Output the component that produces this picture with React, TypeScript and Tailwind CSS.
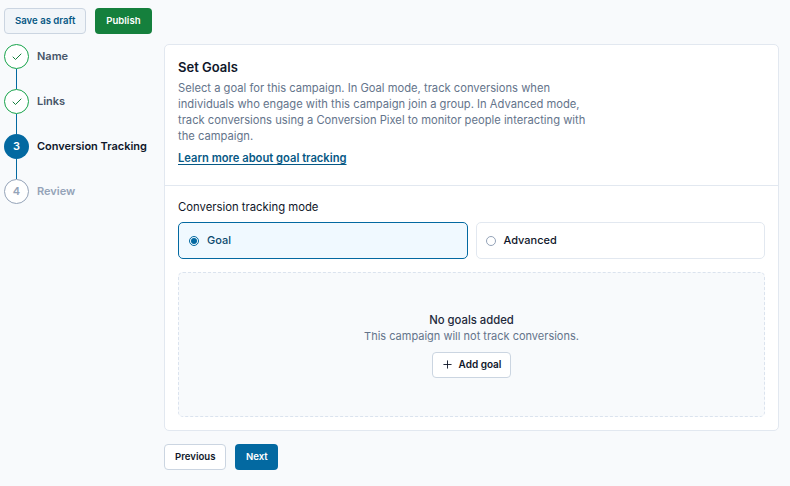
import React from "react";

function Check() {
  return (
    <svg width="12" height="12" viewBox="0 0 24 24" fill="none" stroke="#15803d" strokeWidth="2" strokeLinecap="round" strokeLinejoin="round">
      <path d="M20 6 9 17l-5-5" />
    </svg>
  );
}

function Step({ state, n, label }: { state: "done" | "current" | "todo"; n: number; label: string }) {
  let circle = "";
  let text = "";
  if (state === "done") {
    circle = "border border-[#16a34a] bg-white";
    text = "text-[#475569]";
  } else if (state === "current") {
    circle = "bg-[#0369a1] text-white";
    text = "text-[#0f172a]";
  } else {
    circle = "border border-[#94a3b8] bg-white text-[#94a3b8]";
    text = "text-[#94a3b8]";
  }
  return (
    <div className="flex items-center gap-[8px] h-[25px]">
      <div className={`w-[25px] h-[25px] rounded-full flex items-center justify-center text-[11px] font-semibold ${circle}`}>
        {state === "done" ? <Check /> : n}
      </div>
      <span className={`text-[11px] font-semibold ${text}`}>{label}</span>
    </div>
  );
}

function Connector() {
  return (
    <div className="w-[25px] flex justify-center">
      <div className="w-[1.5px] h-[20px] bg-[#0369a1]" />
    </div>
  );
}

export default function App() {
  return (
    <div className="w-[790px] h-[486px] bg-[#f8fafc] overflow-hidden" style={{ fontFamily: "Inter, 'Liberation Sans', sans-serif" }}>
      <div className="flex gap-[9px] pl-[4px] pt-[8px]">
        <button className="h-[26px] px-[10px] rounded-[4px] border border-[#cbd5e1] bg-[#f1f5f9] text-[9.6px] font-semibold text-[#075985]">
          Save as draft
        </button>
        <button className="h-[26px] px-[11px] rounded-[4px] bg-[#15803d] text-[9.6px] font-semibold text-white">
          Publish
        </button>
      </div>
      <div className="flex pl-[4px] pt-[10px]">
        <div className="w-[160px] flex flex-col">
          <Step state="done" n={1} label="Name" />
          <Connector />
          <Step state="done" n={2} label="Links" />
          <Connector />
          <Step state="current" n={3} label="Conversion Tracking" />
          <Connector />
          <Step state="todo" n={4} label="Review" />
        </div>
        <div className="flex flex-col">
          <div className="w-[615px] bg-white border border-[#e2e8f0] rounded-[5px]">
            <div className="px-[13px] pt-[13px] pb-[19px] border-b border-[#e2e8f0]">
              <h2 className="text-[13px] font-semibold text-[#0f172a] leading-[18px]">Set Goals</h2>
              <p className="mt-[4px] w-[420px] text-[11.2px] leading-[16px] text-[#64748b]">
                Select a goal for this campaign. In Goal mode, track conversions when individuals who engage with this campaign join a group. In Advanced mode, track conversions using a Conversion Pixel to monitor people interacting with the campaign.
              </p>
              <a className="block w-fit mt-[6px] text-[11.2px] font-semibold text-[#075985] underline underline-offset-2 leading-[16px]">
                Learn more about goal tracking
              </a>
            </div>
            <div className="px-[13px] pt-[13px] pb-[13px]">
              <div className="text-[11.3px] text-[#0f172a] leading-[16px]">Conversion tracking mode</div>
              <div className="mt-[7px] grid grid-cols-2 gap-[8px]">
                <div className="h-[37px] rounded-[5px] border border-[#0369a1] bg-[#f0f9ff] flex items-center gap-[8px] px-[10px]">
                  <div className="w-[10px] h-[10px] rounded-full border border-[#0369a1] flex items-center justify-center">
                    <div className="w-[6px] h-[6px] rounded-full bg-[#0369a1]" />
                  </div>
                  <span className="text-[11px] font-medium text-[#0c4a6e]">Goal</span>
                </div>
                <div className="h-[37px] rounded-[5px] border border-[#e2e8f0] bg-white flex items-center gap-[8px] px-[9px]">
                  <div className="w-[10px] h-[10px] rounded-full border border-[#94a3b8]" />
                  <span className="text-[11px] font-medium text-[#0f172a]">Advanced</span>
                </div>
              </div>
              <div className="mt-[13px] h-[145px] rounded-[5px] border border-dashed border-[#dbe3ee] bg-[#f8fafc] flex flex-col items-center justify-center">
                <div className="text-[11.3px] font-medium text-[#1e293b] leading-[16px]">No goals added</div>
                <div className="text-[11px] text-[#64748b] leading-[16px]">This campaign will not track conversions.</div>
                <button className="mt-[8px] h-[26px] px-[9px] rounded-[4px] border border-[#cbd5e1] bg-white flex items-center gap-[6px] text-[10px] font-semibold text-[#0f172a]">
                  <svg width="11" height="11" viewBox="0 0 24 24" fill="none" stroke="#0f172a" strokeWidth="2" strokeLinecap="round">
                    <path d="M12 4v16M4 12h16" />
                  </svg>
                  Add goal
                </button>
              </div>
            </div>
          </div>
          <div className="flex gap-[9px] mt-[13px]">
            <button className="h-[26px] px-[10px] rounded-[4px] border border-[#cbd5e1] bg-white text-[9.6px] font-semibold text-[#0f172a]">
              Previous
            </button>
            <button className="h-[26px] px-[10.5px] rounded-[4px] bg-[#0369a1] text-[9.6px] font-semibold text-white">
              Next
            </button>
          </div>
        </div>
      </div>
    </div>
  );
}
